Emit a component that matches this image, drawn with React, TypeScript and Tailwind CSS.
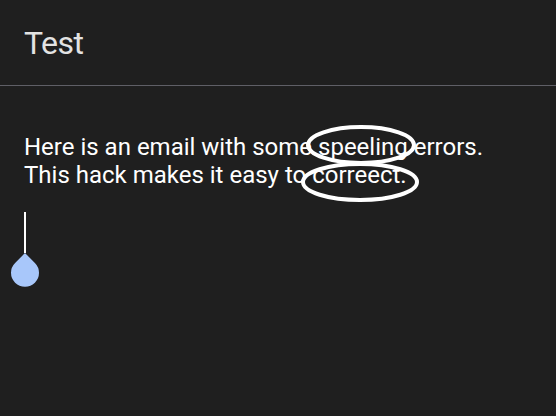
export default function App() {
  return (
    <div
      className="relative h-[416px] w-[556px] overflow-hidden bg-[#1f1f1f] text-white"
      style={{ fontFamily: "Roboto, 'Noto Sans', sans-serif" }}
    >
      <header className="flex h-[86px] items-center border-b border-[#5f5f66] px-6">
        <h1 className="text-[32px] font-normal leading-none tracking-[-0.5px] text-[#e3e3e3]">Test</h1>
      </header>

      <div className="px-6 pt-[47px] text-[24px] leading-[28px]">
        <p>Here is an email with some speeling errors.</p>
        <p>This hack makes it easy to correect.</p>
      </div>

      {/* selection handle */}
      <div className="ml-[10px] mt-[23px] flex w-[30px] flex-col items-center">
        <div className="h-[41px] w-[2px] bg-white" />
        <svg width="30" height="34" viewBox="0 0 30 34">
          <path d="M15 0 L24.9 9.9 A14 14 0 1 1 5.1 9.9 Z" fill="#a8c7fa" />
        </svg>
      </div>

      {/* hand-drawn circles */}
      <svg
        className="pointer-events-none absolute left-0 top-0"
        width="556"
        height="416"
        viewBox="0 0 556 416"
      >
        <ellipse cx="361" cy="145" rx="53" ry="18" fill="none" stroke="white" strokeWidth="4" />
        <ellipse cx="360" cy="182" rx="57" ry="18" fill="none" stroke="white" strokeWidth="4" />
      </svg>
    </div>
  );
}
